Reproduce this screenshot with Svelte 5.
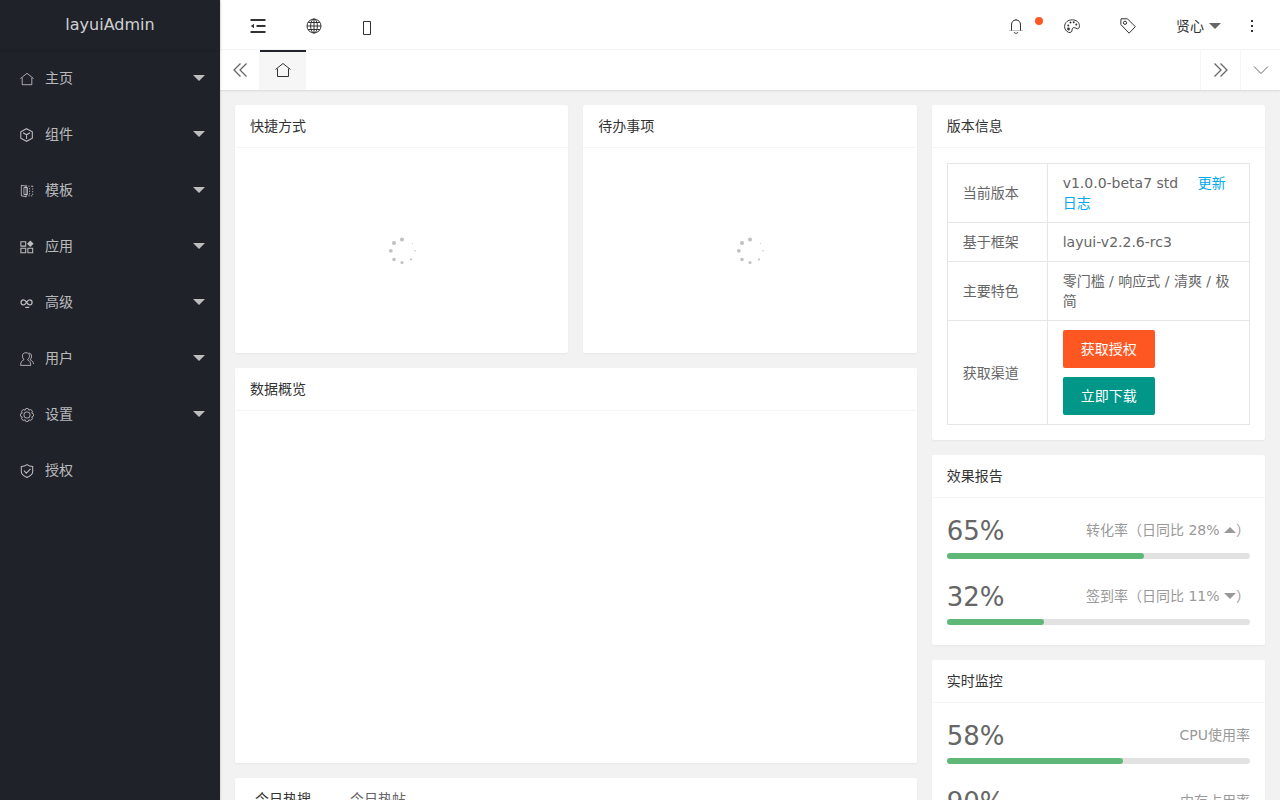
<script lang="ts">
const menu = [
    { icon: 'home', title: '主页', children: true },
    { icon: 'component', title: '组件', children: true },
    { icon: 'template', title: '模板', children: true },
    { icon: 'app', title: '应用', children: true },
    { icon: 'senior', title: '高级', children: true },
    { icon: 'user', title: '用户', children: true },
    { icon: 'set', title: '设置', children: true },
    { icon: 'auth', title: '授权', children: false },
];

const shortcuts = ['快捷方式', '待办事项'];

const reports = [
    { percent: 65, label: '转化率', compare: '28%', trend: 'up' },
    { percent: 32, label: '签到率', compare: '11%', trend: 'down' },
];

const monitors = [
    { percent: 58, label: 'CPU使用率' },
    { percent: 90, label: '内存占用率' },
];

// loading dots, clockwise from the top
const dots = [
    [15, 3.5, 2.1], [25.5, 7.5, 0.5], [28, 14.8, 0.8], [24, 23.5, 1.1],
    [15, 26.5, 1.6], [7, 23.5, 1.8], [3.8, 14.800, 1.9], [7, 7, 2.1],
];

let activeTab = $state(0);
</script>

{#snippet icon(name: string)}
    <svg class="icon" viewBox="0 0 16 16" aria-hidden="true">
        {#if name === 'home'}
            <path d="M.5 7.500 8 1.500l7.500 6M2.500 6.500v8h11v-8" />
        {:else if name === 'component'}
            <path class="semi" d="M7.500 .8l6.600 3.500v7.400l-6.600 3.500-6.600-3.500V4.300zM3.500 5.500l4 2.300 4-2.300M7.500 7.800v4.700" />
        {:else if name === 'template'}
            <path d="M7 2.500 1.500 1.500v12l5.500 1M4.500 4h4v8h-4zM7 1v14" />
            <path d="M9.500 2.500h5M9.500 13.500h5M11 4.500v8M14.500 2v12" stroke-dasharray="1.500 1.500" />
        {:else if name === 'app'}
            <path class="semi" d="M1 2h5.500v5H1zM1 9.500h5.500v5H1zM9 9.500h5.500v5H9z" />
            <path class="fill" d="M11.800 .5l3.800 3.800-3.800 3.800L8 4.300z" />
        {:else if name === 'senior'}
            <path class="bold" d="M7.500 7.300C6.300 5.300 5.300 4.500 4 4.500a2.800 2.800 0 0 0 0 5.600c1.500 0 2.400-1.100 3.500-2.800s2-2.800 3.500-2.800a2.800 2.800 0 0 1 0 5.600c-1.300 0-2.300-.8-3.500-2.800M6 12.900h4.500" />
        {:else if name === 'user'}
            <path d="M4.500 8.800C2 10 .7 11.500.7 15.300h11.600c0-4-1.400-5.400-3.800-6.500 2-1.500 2.300-3.100 2.300-4.400C10.800 2.300 9.200.8 6.700.8S2.800 2.300 2.800 4.400c0 1.700.6 3.200 1.700 4.400zM10 1.200c2 .2 3.200 1.700 3.200 3.400 0 1.800-.5 3-1.600 4.200 2.300 1 3.600 2.500 3.900 5" />
        {:else if name === 'set'}
            <path d="M5.800 2.600a2.200 2.200 0 0 1 4.400 0a2.200 2.200 0 0 1 3.200 3.200a2.200 2.200 0 0 1 0 4.400a2.200 2.200 0 0 1-3.200 3.200a2.200 2.200 0 0 1-4.400 0a2.200 2.200 0 0 1-3.200-3.200a2.200 2.200 0 0 1 0-4.400a2.200 2.200 0 0 1 3.200-3.200z" />
            <circle cx="8" cy="8" r="3.600" />
        {:else if name === 'auth'}
            <path class="semi" d="M8 .8c2 1.500 4 2 6.500 2v6c0 3-3 5-6.500 6.600C4.500 13.800 1.500 11.800 1.500 8.800v-6c2.500 0 4.500-.5 6.500-2zM4.500 7.700l2.700 2.800 4.800-4.800" />
        {:else if name === 'shrink'}
            <path class="thick" d="M.5 2h15M6.500 8h9M.5 14h15" />
            <path class="fill" d="M4 5.800v4.400L.8 8z" />
        {:else if name === 'website'}
            <circle cx="8" cy="8" r="7" />
            <ellipse cx="8" cy="8" rx="3.400" ry="7" />
            <path d="M8 1v14M1 8h14M2.200 4.500h11.600M2.200 11.500h11.600" />
        {:else if name === 'notice'}
            <path d="M8 1v1M3.500 12.500V7c0-3 1.500-5 4.500-5s4.500 2 4.500 5v5.500M6 14c.5 1 1 1.300 2 1.300s1.500-.3 2-1.300" />
            <path class="soft" d="M1 12.500h14" />
        {:else if name === 'theme'}
            <path d="M4.500 14.300C2 13.300.6 11 .6 8.500.6 4.500 4 1.800 8.200 1.800c4.300 0 7.200 2.700 7.200 5.800 0 2-.8 3.300-2 3.200-1.300-.2-1.800-1.200-3.300-1.200-1.400 0-2 1-2 2.200 0 2-1.300 3.200-3.600 2.500z" />
            <g class="fill">
                <circle cx="4.300" cy="7.500" r="1" /><circle cx="6.500" cy="4.500" r="1" />
                <circle cx="9.700" cy="4.300" r="1" /><circle cx="12.300" cy="6.500" r="1" /><circle cx="4.500" cy="11" r="1.400" />
            </g>
        {:else if name === 'note'}
            <path d="M1 .8h6.500l7.800 7.900-6.200 6.500L.8 6.500z" />
            <circle cx="5" cy="4.800" r="1.600" />
        {:else if name === 'more'}
            <path class="fill" d="M7 2h2v2H7zM7 7h2v2H7zM7 12h2v2H7z" />
        {:else if name === 'prev'}
            <path class="medium" d="M8.500 1.500 2 8l6.500 6.500M14.500 1.500 8 8l6.500 6.500" />
        {:else if name === 'next'}
            <path class="medium" d="M1.500 1.500 8 8l-6.500 6.500M7.500 1.500 14 8l-6.500 6.500" />
        {:else if name === 'down'}
            <path d="M1 4.500l7 7 7-7" />
        {/if}
    </svg>
{/snippet}

{#snippet progress(percent: number)}
    <div class="progress"><div class="progress-bar" style="width: {percent}%"></div></div>
{/snippet}

<div class="admin">
    <aside class="side">
        <a class="logo" href="#/">layuiAdmin</a>
        <nav>
            {#each menu as item}
                <a class="side-item" href="#/">
                    {@render icon(item.icon)}
                    <span>{item.title}</span>
                    {#if item.children}<i class="caret"></i>{/if}
                </a>
            {/each}
        </nav>
    </aside>

    <div class="main">
        <header class="header">
            <div class="header-left">
                <button type="button" aria-label="侧边伸缩">{@render icon('shrink')}</button>
                <a href="#/" aria-label="前台">{@render icon('website')}</a>
                <button type="button" aria-label="刷新">
                    <svg class="refresh" viewBox="0 0 9 16" aria-hidden="true"><path d="M1.500 3.500h7v13h-7z" /></svg>
                </button>
            </div>
            <div class="header-right">
                <a class="notice" href="#/" aria-label="消息">{@render icon('notice')}<i class="badge"></i></a>
                <button type="button" aria-label="主题">{@render icon('theme')}</button>
                <button type="button" aria-label="便签">{@render icon('note')}</button>
                <button type="button" class="account">贤心<i class="caret"></i></button>
                <button type="button" aria-label="更多">{@render icon('more')}</button>
            </div>
        </header>

        <div class="pagetabs">
            <button type="button" class="prev" aria-label="向左">{@render icon('prev')}</button>
            <a class="pagetab" href="#/" aria-label="主页">{@render icon('home')}</a>
            <button type="button" class="next" aria-label="向右">{@render icon('next')}</button>
            <button type="button" class="menu" aria-label="标签操作">{@render icon('down')}</button>
        </div>

        <main class="body">
            <div class="col wide">
                {#each shortcuts as title}
                    <section class="card">
                        <h2>{title}</h2>
                        <div class="carousel">
                            <svg class="loading" viewBox="0 0 30 30" aria-hidden="true">
                                {#each dots as [cx, cy, r]}
                                    <circle {cx} {cy} {r} />
                                {/each}
                            </svg>
                        </div>
                    </section>
                {/each}
                <section class="card full">
                    <h2>数据概览</h2>
                    <div class="chart"></div>
                </section>
                <section class="card full">
                    <div class="tabs">
                        {#each ['今日热搜', '今日热帖'] as title, i}
                            <button type="button" class:active={activeTab === i} onclick={() => (activeTab = i)}>{title}</button>
                        {/each}
                    </div>
                    <div class="chart"></div>
                </section>
            </div>

            <div class="col">
                <section class="card">
                    <h2>版本信息</h2>
                    <div class="card-body">
                        <table>
                            <tbody>
                                <tr>
                                    <th scope="row">当前版本</th>
                                    <td>v1.0.0-beta7 std <a class="log" href="#/">更新日志</a></td>
                                </tr>
                                <tr>
                                    <th scope="row">基于框架</th>
                                    <td>layui-v2.2.6-rc3</td>
                                </tr>
                                <tr>
                                    <th scope="row">主要特色</th>
                                    <td>零门槛 / 响应式 / 清爽 / 极简</td>
                                </tr>
                                <tr>
                                    <th scope="row">获取渠道</th>
                                    <td>
                                        <div class="btns">
                                            <a class="btn danger" href="#/">获取授权</a>
                                            <a class="btn" href="#/">立即下载</a>
                                        </div>
                                    </td>
                                </tr>
                            </tbody>
                        </table>
                    </div>
                </section>

                <section class="card">
                    <h2>效果报告</h2>
                    <div class="card-body takerates">
                        {#each reports as item}
                            <div class="rate">
                                <h3>{item.percent}%</h3>
                                <span>{item.label}（日同比 {item.compare} <i class="caret {item.trend}"></i>）</span>
                            </div>
                            {@render progress(item.percent)}
                        {/each}
                    </div>
                </section>

                <section class="card">
                    <h2>实时监控</h2>
                    <div class="card-body takerates">
                        {#each monitors as item}
                            <div class="rate">
                                <h3>{item.percent}%</h3>
                                <span>{item.label}</span>
                            </div>
                            {@render progress(item.percent)}
                        {/each}
                    </div>
                </section>
            </div>
        </main>
    </div>
</div>

<style>
:global(body) {
    margin: 0;
    background: #f2f2f2;
    color: #666;
    font: 14px/24px "DejaVu Sans", "Noto Sans CJK SC", sans-serif;
}
a {
    color: inherit;
    text-decoration: none;
}
button {
    margin: 0;
    padding: 0;
    border: 0;
    background: none;
    color: inherit;
    font: inherit;
    cursor: pointer;
}
h2,
h3 {
    margin: 0;
    font-weight: normal;
}
.icon {
    width: 16px;
    height: 16px;
    flex: none;
    fill: none;
    stroke: currentColor;
}
.icon .fill {
    fill: currentColor;
    stroke: none;
}
.icon .semi {
    stroke-width: 1.2;
}
.icon .bold {
    stroke-width: 1.4;
}
.icon .thick {
    stroke-width: 2;
}
.icon .medium {
    stroke-width: 1.3;
}
.icon .soft {
    opacity: 0.3;
}
.caret {
    display: inline-block;
    border: 6px solid transparent;
    border-top-color: currentColor;
    border-bottom-width: 0;
}
.caret.up {
    border-top-width: 0;
    border-bottom: 6px solid currentColor;
}
.rate .caret {
    vertical-align: 2px;
}
.admin {
    display: flex;
    height: 100vh;
    overflow: hidden;
}

/* sidebar */
.side {
    position: relative;
    z-index: 2;
    flex: none;
    width: 220px;
    background: #20222a;
    color: rgba(255, 255, 255, 0.7);
    box-shadow: 1px 0 2px rgba(0, 0, 0, 0.1);
}
.logo {
    display: block;
    height: 50px;
    line-height: 49px;
    font-size: 16px;
    text-align: center;
    color: rgba(255, 255, 255, 0.8);
    box-shadow: 0 1px 2px rgba(0, 0, 0, 0.15);
}
.side-item {
    display: flex;
    align-items: center;
    height: 56px;
    padding: 0 15px 0 20px;
}
.side-item .icon {
    width: 14px;
    height: 14px;
    margin: 2px 11px 0 0;
}
.side-item .caret {
    margin-left: auto;
}

/* header */
.main {
    flex: 1;
    min-width: 0;
    display: flex;
    flex-direction: column;
}
.header {
    display: flex;
    justify-content: space-between;
    flex: none;
    height: 49px;
    padding-left: 10px;
    border-bottom: 1px solid #f6f6f6;
    background: #fff;
    color: #333;
}
.header-left,
.header-right {
    display: flex;
}
.header a,
.header button {
    display: flex;
    align-items: center;
    padding: 2px 20px 0;
}
.header .account {
    padding: 2px 3px 0 20px;
}
.account .caret {
    margin-left: 5px;
    color: #666;
}
.refresh {
    width: 9px;
    height: 16px;
    overflow: visible;
    fill: none;
    stroke: #333;
}
.notice {
    position: relative;
}
.badge {
    position: absolute;
    top: 17px;
    right: 1px;
    width: 8px;
    height: 8px;
    border-radius: 50%;
    background: #ff5722;
}
.pagetabs {
    position: relative;
    z-index: 1;
    display: flex;
    flex: none;
    height: 40px;
    background: #fff;
    box-shadow: 0 1px 2px rgba(0, 0, 0, 0.1);
}
.pagetabs button {
    box-sizing: border-box;
    display: flex;
    align-items: center;
    justify-content: center;
    width: 40px;
}
.pagetab {
    box-sizing: border-box;
    display: flex;
    align-items: center;
    padding: 0 15px;
    border-top: 2px solid #20222a;
    background: #f6f6f6;
    color: #333;
}
.pagetab .icon {
    margin-bottom: 2px;
}
.pagetabs .prev {
    border-right: 1px solid #f6f6f6;
}
.pagetabs .next,
.pagetabs .menu {
    border-left: 1px solid #f6f6f6;
}
.pagetabs .next {
    margin-left: auto;
}

/* cards */
.body {
    flex: 1;
    min-height: 0;
    display: grid;
    grid-template-columns: repeat(3, minmax(0, 1fr));
    gap: 15px;
    align-items: start;
    padding: 15px;
    overflow-y: auto;
    scrollbar-width: none;
}
.col {
    display: grid;
    gap: 15px;
}
.wide {
    grid-column: span 2;
    grid-template-columns: repeat(2, minmax(0, 1fr));
}
.full {
    grid-column: 1 / -1;
}
.card {
    border-radius: 2px;
    background: #fff;
    box-shadow: 0 1px 2px rgba(0, 0, 0, 0.05);
}
.card h2 {
    height: 42px;
    padding: 0 15px;
    border-bottom: 1px solid #f6f6f6;
    color: #333;
    font-size: 14px;
    line-height: 42px;
}
.card-body {
    padding: 15px;
}
.carousel {
    display: flex;
    align-items: center;
    justify-content: center;
    height: 205px;
}
.loading {
    width: 30px;
    height: 30px;
    fill: #c2c2c2;
}
.chart {
    height: 352px;
}
.tabs {
    display: flex;
    gap: 39px;
    padding: 0 20px;
    border-bottom: 1px solid #f6f6f6;
    line-height: 42px;
}
.tabs .active {
    color: #333;
}
table {
    width: 100%;
    border-collapse: collapse;
    line-height: 20px;
}
th,
td {
    padding: 9px 15px;
    border: 1px solid #e6e6e6;
    font-weight: normal;
    text-align: left;
}
th {
    width: 69px;
    white-space: nowrap;
}
.log {
    margin-left: 15px;
    color: #01aaed;
}
.btns {
    display: flex;
    flex-direction: column;
    align-items: flex-start;
    gap: 9px;
}
.btn {
    padding: 0 18px;
    border-radius: 2px;
    background: #009688;
    color: #fff;
    line-height: 38px;
}
.btn.danger {
    background: #ff5722;
}
.takerates {
    padding-bottom: 20px;
}
.rate {
    display: flex;
    align-items: center;
    justify-content: space-between;
    height: 36px;
    margin-bottom: 4px;
    color: #999;
}
.rate h3 {
    color: #666;
    font-size: 26px;
    line-height: 36px;
}
.rate span {
    padding-bottom: 2px;
}
.progress {
    height: 6px;
    border-radius: 3px;
    background: #e2e2e2;
}
.progress + .rate {
    margin-top: 20px;
}
.progress-bar {
    height: 100%;
    border-radius: 3px;
    background: #5fb878;
}
</style>
